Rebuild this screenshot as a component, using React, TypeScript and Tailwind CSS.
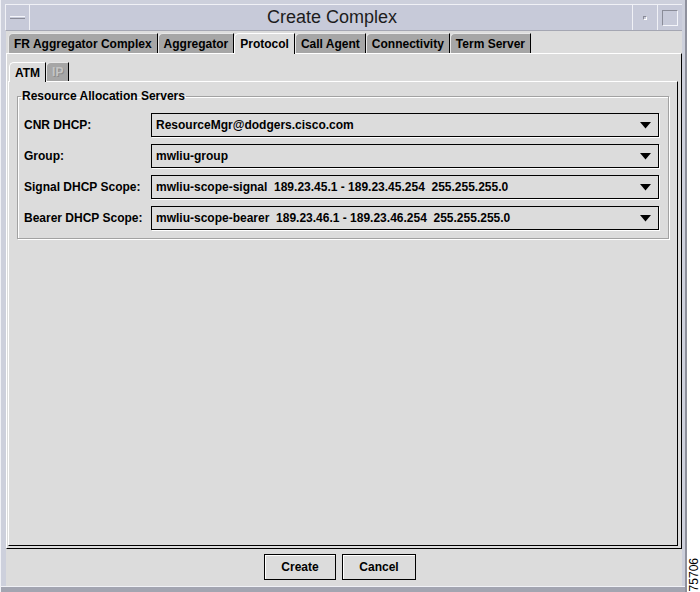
import React from "react";

function Tab({ label, selected }: { label: string; selected?: boolean }) {
  return (
    <div
      className={
        "h-[20px] px-[5px] flex items-center border-l border-t border-r rounded-tl-[5px] text-[12px] font-bold leading-none " +
        (selected
          ? "bg-[#dcdcdc] border-l-white border-t-white border-r-black h-[21px] -mb-px relative z-10"
          : "bg-[#a6a6a6] border-l-[#e8e8e8] border-t-[#e8e8e8] border-r-black")
      }
    >
      {label}
    </div>
  );
}

function Combo({ value }: { value: string }) {
  return (
    <div className="flex-1 h-[24px] border border-black bg-[#dcdcdc] shadow-[1px_1px_0_#ffffff] flex items-center pl-[4px] pr-[7px]">
      <span className="flex-1 text-[12px] font-bold whitespace-pre">{value}</span>
      <svg width="11" height="7" viewBox="0 0 11 7">
        <polygon points="0,0 11,0 5.5,6.5" fill="#000" />
      </svg>
    </div>
  );
}

function Row({ label, value }: { label: string; value: string }) {
  return (
    <div className="flex items-center h-[24px]">
      <div className="w-[127px] text-[12px] font-bold">{label}</div>
      <Combo value={value} />
    </div>
  );
}

export default function App() {
  return (
    <div className="w-[700px] h-[592px] bg-white flex overflow-hidden font-['Liberation_Sans',Arial,sans-serif] text-black">
      {/* window */}
      <div className="w-[687px] h-full flex flex-col bg-[#cdd0dc] border-l border-l-[#f0f1f6] border-r-2 border-r-[#8f919d]">
        {/* title bar */}
        <div className="h-[31px] pt-[4px] pl-[4px] pr-[3px] flex">
          <div className="flex-1 flex border-t border-l border-[#f0f1f6] border-b border-b-[#a4a6b2] bg-[#c7cad9]">
            <div className="w-[24px] flex items-center justify-center border-r border-[#f0f1f6]">
              <div className="w-[15px] h-[3px] border-t border-[#f4f5fa] border-b border-b-[#8a8c98]" />
            </div>
            <div className="flex-1 flex items-center justify-center text-[18px] text-[#1c1c1c] pl-[2px]">
              Create Complex
            </div>
            <div className="w-[25px] border-l border-[#f0f1f6] flex items-center justify-center">
              <div className="w-[4px] h-[4px] border border-t-[#8a8c98] border-l-[#8a8c98] border-r-white border-b-white" />
            </div>
            <div className="w-[25px] border-l border-[#f0f1f6] flex items-center justify-center">
              <div className="w-[16px] h-[16px] border border-t-[#8a8c98] border-l-[#8a8c98] border-r-[#f4f5fa] border-b-[#f4f5fa]" />
            </div>
          </div>
        </div>

        {/* body */}
        <div className="flex-1 ml-[5px] mr-[3px] bg-[#dcdcdc] flex flex-col pt-[2px]">
          {/* tabs */}
          <div className="flex items-end pl-[2px] h-[20px]">
            <Tab label="FR Aggregator Complex" />
            <Tab label="Aggregator" />
            <Tab label="Protocol" selected />
            <Tab label="Call Agent" />
            <Tab label="Connectivity" />
            <Tab label="Term Server" />
          </div>

          {/* outer panel */}
          <div className="h-[496px] border-t border-l border-t-white border-l-white border-r border-b border-r-black border-b-black flex flex-col pt-[7px] pl-[1px] pr-[3px] pb-[2px]">
            {/* sub tabs */}
            <div className="flex items-end pl-[1px] h-[20px]">
              <div className="h-[20px] -mb-px relative z-10 px-[5px] flex items-center bg-[#dcdcdc] border-l border-t border-r border-l-white border-t-white border-r-black rounded-tl-[5px] text-[12px] font-bold">
                ATM
              </div>
              <div className="h-[19px] px-[5px] flex items-center bg-[#a6a6a6] border-l border-t border-r border-l-[#e8e8e8] border-t-[#e8e8e8] border-r-black rounded-tl-[5px] text-[12px] font-bold text-[#c4c4c4] [text-shadow:1px_1px_0_#8c8c8c]">
                IP
              </div>
            </div>

            {/* inner panel */}
            <div className="flex-1 border-t border-l border-t-white border-l-white border-r border-b border-r-black border-b-black pt-[7px] px-[8px]">
              <fieldset className="border border-[#a2a2a2] shadow-[1px_1px_0_#ffffff,inset_1px_1px_0_#ffffff] pl-[6px] pr-[9px] pt-[10px] pb-[8px]">
                <legend className="-ml-[3px] px-[1px] text-[12px] font-bold leading-[14px]">
                  Resource Allocation Servers
                </legend>
                <div className="flex flex-col gap-[7px]">
                  <Row label="CNR DHCP:" value="ResourceMgr@dodgers.cisco.com" />
                  <Row label="Group:" value="mwliu-group" />
                  <Row label="Signal DHCP Scope:" value="mwliu-scope-signal  189.23.45.1 - 189.23.45.254  255.255.255.0" />
                  <Row label="Bearer DHCP Scope:" value="mwliu-scope-bearer  189.23.46.1 - 189.23.46.254  255.255.255.0" />
                </div>
              </fieldset>
            </div>
          </div>

          {/* buttons */}
          <div className="flex-1 flex justify-center gap-[6px] pt-[5px] pr-[8px]">
            <button className="w-[72px] h-[26px] border border-black shadow-[inset_1px_1px_0_#ffffff] bg-[#dcdcdc] text-[12px] font-bold">
              Create
            </button>
            <button className="w-[74px] h-[26px] border border-black shadow-[inset_1px_1px_0_#ffffff] bg-[#dcdcdc] text-[12px] font-bold">
              Cancel
            </button>
          </div>
        </div>

        {/* bottom frame */}
        <div className="h-[6px] border-t border-[#f0f1f6] bg-[#a3a5b1]" />
      </div>

      {/* figure number strip */}
      <div className="flex-1 flex flex-col justify-end items-center pb-[1px]">
        <div className="[writing-mode:vertical-rl] rotate-180 text-[12px] leading-none font-['Liberation_Sans',Arial,sans-serif]">
          75706
        </div>
      </div>
    </div>
  );
}
